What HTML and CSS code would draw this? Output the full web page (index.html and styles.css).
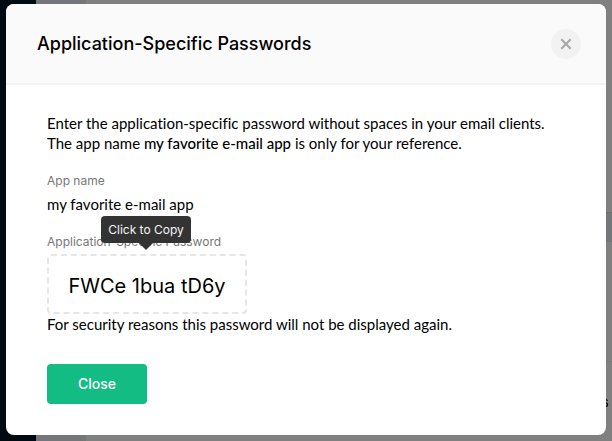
FILE: index.html
```html
<!DOCTYPE html>
<html lang="en">
<head>
<meta charset="utf-8">
<meta name="viewport" content="width=device-width, initial-scale=1">
<title>Application-Specific Passwords</title>
<link rel="stylesheet" href="styles.css">
</head>
<body>
<div class="backdrop" aria-hidden="true">
  <div class="sidebar"></div>
  <div class="gutter"></div>
  <div class="page">
    <div class="page-top"></div>
    <div class="page-band"></div>
    <div class="page-row"></div>
    <div class="page-row page-row-last">s</div>
  </div>
</div>
<main class="overlay">
  <section class="dialog" role="dialog" aria-labelledby="dialog-title">
    <header class="dialog-header">
      <h1 class="dialog-title" id="dialog-title">Application-Specific Passwords</h1>
      <button class="dismiss" type="button" aria-label="Close dialog">
        <svg class="dismiss-icon" viewBox="0 0 12 12" aria-hidden="true"><path d="M1.3 1.3 10.7 10.7M10.7 1.3 1.3 10.7"/></svg>
      </button>
    </header>
    <div class="dialog-body">
      <p class="text">Enter the application-specific password without spaces in your email clients.<br>The app name <strong class="app">my favorite e-mail app</strong> is only for your reference.</p>
      <dl class="fields">
        <dt class="label">App name</dt>
        <dd class="value">my favorite e-mail app</dd>
        <dt class="label">Application-Specific Password</dt>
        <dd class="secret">
          <button class="password" type="button" aria-describedby="copy-tip">FWCe 1bua tD6y</button>
          <span class="tooltip" id="copy-tip" role="tooltip">Click to Copy</span>
        </dd>
      </dl>
      <p class="text">For security reasons this password will not be displayed again.</p>
      <button class="close" type="button">Close</button>
    </div>
  </section>
</main>
</body>
</html>
```
FILE: styles.css
```css
* {
  box-sizing: border-box;
}

body {
  margin: 0;
  background: #808080;
  color: #000;
  font-family: Inter, "Liberation Sans", sans-serif;
  font-size: 14px;
  line-height: 20px;
}

button {
  font: inherit;
  cursor: pointer;
}

.backdrop {
  position: fixed;
  inset: 0;
  display: flex;
  overflow: hidden;
}

.sidebar {
  width: 36px;
  background: #000a10;
}

.gutter {
  width: 50px;
  background: #757679;
}

.page {
  flex: 1;
  text-align: right;
}

.page-top {
  height: 212px;
}

.page-band {
  height: 30px;
  border-top: 1px solid #6c6c6c;
  background: #73777a;
}

.page-row {
  height: 120px;
  border-bottom: 1px solid #787878;
}

.page-row-last {
  padding: 30px 3px 0 0;
  border: 0;
}

.overlay {
  position: relative;
  min-height: 100vh;
  padding: 4px 6px 6px;
}

.dialog {
  overflow: hidden;
  border-radius: 8px;
  background: #fff;
}

.dialog-header {
  display: flex;
  align-items: center;
  justify-content: space-between;
  height: 81px;
  padding: 0 25px 0 31px;
  border-bottom: 2px solid #f3f3f3;
  background: #fafafa;
}

.dialog-title {
  margin: 0;
  font-size: 18px;
  font-weight: 500;
  line-height: 24px;
}

.dismiss {
  display: grid;
  place-items: center;
  width: 30px;
  height: 30px;
  padding: 0;
  border: 0;
  border-radius: 50%;
  background: #f2f2f2;
}

.dismiss-icon {
  width: 12px;
  height: 12px;
  fill: none;
  stroke: #a6a6a6;
  stroke-width: 2;
}

.dialog-body {
  padding: 28px 41px 31px;
}

.text,
.value {
  font-family: Lato, Inter, sans-serif;
  font-size: 15px;
  font-variant-ligatures: none;
}

.text {
  margin: 0;
}

.app {
  font-weight: 500;
}

.fields {
  margin: 18px 0 0;
}

.label {
  color: #777;
  font-size: 12px;
}

.value {
  margin: 3px 0 18px;
}

.secret {
  position: relative;
  width: 200px;
  margin: 2px 0 0;
}

.password {
  display: block;
  width: 100%;
  height: 60px;
  padding: 4px 0 0;
  border: 2px dashed #e6e6e6;
  border-radius: 4px;
  background: #fff;
  color: #000;
  font-size: 20px;
}

.tooltip {
  position: absolute;
  right: 56px;
  bottom: 100%;
  width: 90px;
  margin-bottom: 11px;
  border-radius: 4px;
  background: #333;
  color: #f5f5f5;
  font-size: 12px;
  line-height: 27px;
  text-align: center;
}

.tooltip::after {
  content: "";
  position: absolute;
  top: 100%;
  left: 50%;
  margin-left: -7px;
  border: 7px solid transparent;
  border-top-color: #333;
  border-bottom: 0;
}

.close {
  display: block;
  width: 100px;
  height: 40px;
  margin-top: 30px;
  padding: 0;
  border: 0;
  border-radius: 4px;
  background: #12bc83;
  color: #fff;
  font-weight: 500;
}
```
